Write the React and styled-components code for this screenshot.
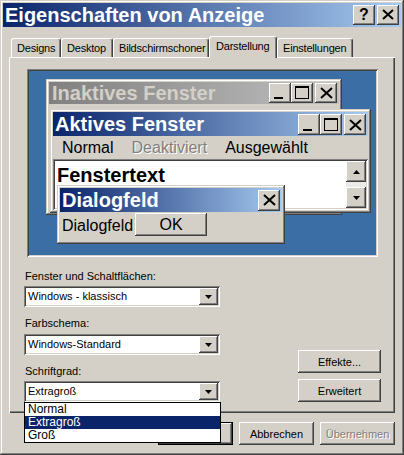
import React from 'react';
import styled, { createGlobalStyle } from 'styled-components';

const FACE = '#d4d0c8';

const GlobalStyle = createGlobalStyle`
  html, body {
    margin: 0;
    padding: 0;
    background: #d4d0c8;
  }
  body {
    font-family: "Liberation Sans", Arial, sans-serif;
    font-size: 11px;
    color: #000;
  }
  *, *::before, *::after {
    box-sizing: border-box;
  }
`;

const frameRaised = `box-shadow: inset -1px -1px #404040, inset 1px 1px #d4d0c8, inset -2px -2px #808080, inset 2px 2px #ffffff;`;
const buttonRaised = `box-shadow: inset -1px -1px #404040, inset 1px 1px #ffffff, inset -2px -2px #808080, inset 2px 2px #d4d0c8;`;
const fieldSunken = `box-shadow: inset 1px 1px #808080, inset -1px -1px #ffffff, inset 2px 2px #404040, inset -2px -2px #d4d0c8;`;

const Window = styled.div`
  width: 404px;
  height: 455px;
  padding: 3px;
  background: ${FACE};
  display: flex;
  flex-direction: column;
  ${frameRaised}
`;

const TitleBar = styled.div`
  height: 24px;
  flex: none;
  display: flex;
  align-items: center;
  padding: 0 2px;
  background: linear-gradient(to right, #0a246a, #a6caf0);
`;

const TitleText = styled.span`
  flex: 1;
  color: #fff;
  font-size: 20px;
  font-weight: bold;
  white-space: nowrap;
`;

const CaptionButton = styled.div`
  width: 22px;
  height: 20px;
  margin-left: 2px;
  display: flex;
  align-items: center;
  justify-content: center;
  background: ${FACE};
  ${buttonRaised}
  font-size: 16px;
  font-weight: bold;
  line-height: 1;
`;

const Body = styled.div`
  flex: 1;
  display: flex;
  flex-direction: column;
  padding: 9px 6px 0;
`;

const TabRow = styled.div`
  height: 21px;
  display: flex;
  align-items: flex-end;
  padding-left: 2px;
  position: relative;
  z-index: 1;
`;

const Tab = styled.div`
  width: ${p => p.$w}px;
  height: ${p => (p.$active ? 22 : 19)}px;
  margin-bottom: ${p => (p.$active ? -1 : 0)}px;
  padding: 0 0 ${p => (p.$active ? 3 : 0)}px ${p => (p.$active ? 6 : 5)}px;
  display: flex;
  align-items: center;
  background: ${FACE};
  border-top: 1px solid #fff;
  border-left: 1px solid #fff;
  border-right: 1px solid #404040;
  border-radius: 3px 3px 0 0;
  box-shadow: inset -1px 0 #808080;
  letter-spacing: -0.2px;
  white-space: nowrap;
`;

const Panel = styled.div`
  height: 356px;
  flex: none;
  padding: 12px 14px 0 15px;
  display: flex;
  flex-direction: column;
  box-shadow: inset 1px 1px #fff, inset -1px -1px #404040, inset -2px -2px #808080;
`;

const Preview = styled.div`
  position: relative;
  height: 188px;
  flex: none;
  margin: 0 3px;
  background: #3a6ea5;
  overflow: hidden;
  ${fieldSunken}
`;

const MiniWindow = styled.div`
  position: absolute;
  left: ${p => p.$x}px;
  top: ${p => p.$y}px;
  width: ${p => p.$w}px;
  height: ${p => p.$h}px;
  padding: 3px;
  background: ${FACE};
  display: flex;
  flex-direction: column;
  overflow: hidden;
  ${frameRaised}
`;

const MiniTitle = styled.div`
  height: ${p => p.$h}px;
  flex: none;
  display: flex;
  align-items: center;
  padding: 0 2px 0 ${p => p.$pad}px;
  background: ${p =>
    p.$inactive
      ? 'linear-gradient(to right, #808080, #c0c0c0)'
      : 'linear-gradient(to right, #0a246a, #a6caf0)'};
  color: ${p => (p.$inactive ? '#d4d0c8' : '#fff')};
  font-size: 20px;
  font-weight: bold;
  white-space: nowrap;
`;

const Grow = styled.span`
  flex: 1;
`;

const MiniButton = styled.div`
  width: 22px;
  height: ${p => p.$h}px;
  margin-left: ${p => p.$gap || 0}px;
  flex: none;
  display: flex;
  background: ${FACE};
  ${buttonRaised}
`;

const MenuBar = styled.div`
  height: 23px;
  flex: none;
  display: flex;
  align-items: center;
  gap: 18px;
  padding-left: 9px;
  font-size: 16px;
`;

const MenuItem = styled.span`
  color: ${p => (p.$disabled ? '#808080' : '#000')};
  text-shadow: ${p => (p.$disabled ? '1px 1px #fff' : 'none')};
`;

const TextArea = styled.div`
  flex: 1;
  display: flex;
  padding: 2px;
  background: #fff;
  ${fieldSunken}
`;

const WindowText = styled.div`
  flex: 1;
  padding: 2px 0 0 2px;
  font-size: 20px;
  font-weight: bold;
  line-height: 24px;
`;

const ScrollBar = styled.div`
  width: 20px;
  display: flex;
  flex-direction: column;
  justify-content: space-between;
  background: #eceae6;
`;

const ScrollButton = styled.div`
  height: 21px;
  display: flex;
  align-items: center;
  justify-content: center;
  background: ${FACE};
  ${buttonRaised}
`;

const DialogBody = styled.div`
  flex: 1;
  display: flex;
  align-items: flex-start;
  padding-left: 2px;
  font-size: 16px;
`;

const DialogLabel = styled.span`
  width: 73px;
  line-height: 28px;
  overflow: hidden;
  white-space: nowrap;
`;

const DialogButton = styled.div`
  width: 72px;
  height: 23px;
  margin-top: 1px;
  display: flex;
  align-items: center;
  justify-content: center;
  background: ${FACE};
  ${buttonRaised}
`;

const Lower = styled.div`
  display: flex;
  justify-content: space-between;
  align-items: flex-end;
`;

const Fields = styled.div`
  width: 197px;
  display: flex;
  flex-direction: column;
`;

const FieldLabel = styled.div`
  margin-top: ${p => p.$mt}px;
  padding-left: 1px;
  height: 13px;
  line-height: 13px;
  white-space: nowrap;
`;

const Combo = styled.div`
  position: relative;
  width: 196px;
  height: 21px;
  margin-top: ${p => p.$mt}px;
  padding: 2px;
  display: flex;
  background: #fff;
  ${fieldSunken}
`;

const ComboValue = styled.div`
  flex: 1;
  padding-left: 2px;
  line-height: 17px;
  white-space: nowrap;
`;

const ComboArrow = styled.div`
  width: 19px;
  height: 17px;
  display: flex;
  align-items: center;
  justify-content: center;
  background: ${FACE};
  ${buttonRaised}
`;

const DropList = styled.div`
  position: absolute;
  left: 0;
  top: 100%;
  width: 197px;
  z-index: 5;
  background: #fff;
  border: 1px solid #000;
`;

const DropItem = styled.div`
  height: 13px;
  line-height: 13px;
  padding-left: 3px;
  font-size: 12px;
  background: ${p => (p.$selected ? '#0a246a' : 'transparent')};
  color: ${p => (p.$selected ? '#fff' : '#000')};
`;

const Actions = styled.div`
  display: flex;
  flex-direction: column;
  gap: 6px;
`;

const PushButton = styled.div`
  width: ${p => p.$w || 75}px;
  height: 23px;
  display: flex;
  align-items: center;
  justify-content: center;
  background: ${FACE};
  color: ${p => (p.$disabled ? '#808080' : '#000')};
  text-shadow: ${p => (p.$disabled ? '1px 1px #fff' : 'none')};
  ${p =>
    p.$default
      ? 'box-shadow: inset 0 0 0 1px #000, inset -2px -2px #404040, inset 2px 2px #fff, inset -3px -3px #808080;'
      : buttonRaised}
`;

const ButtonRow = styled.div`
  display: flex;
  justify-content: flex-end;
  gap: 6px;
  margin-top: 9px;
`;

const CloseGlyph = ({ w = 22, h = 21, x0 = 6, y0 = 6, size = 11 }) => (
  <svg width={w} height={h} viewBox={`0 0 ${w} ${h}`}>
    <path
      d={`M${x0} ${y0} L${x0 + size} ${y0 + size - 1} M${x0 + size} ${y0} L${x0} ${y0 + size - 1}`}
      stroke="#000"
      strokeWidth="2"
      fill="none"
    />
  </svg>
);

const MinGlyph = ({ h = 21 }) => (
  <svg width="22" height={h} viewBox={`0 0 22 ${h}`}>
    <rect x="5" y={h - 6} width="9" height="2" fill="#000" />
  </svg>
);

const MaxGlyph = ({ h = 21 }) => (
  <svg width="22" height={h} viewBox={`0 0 22 ${h}`}>
    <rect x="4.5" y={h - 16.5} width="13" height="12" fill="none" stroke="#000" />
    <rect x="4" y={h - 17} width="14" height="2" fill="#000" />
  </svg>
);

const Arrow = ({ up }) => (
  <svg width="7" height="4" viewBox="0 0 7 4">
    <polygon points={up ? '3.5,0 7,4 0,4' : '0,0 7,0 3.5,4'} fill="#000" />
  </svg>
);

const TitleButtons = ({ h }) => (
  <>
    <MiniButton $h={h}>
      <MinGlyph h={h} />
    </MiniButton>
    <MiniButton $h={h}>
      <MaxGlyph h={h} />
    </MiniButton>
    <MiniButton $h={h} $gap={2}>
      <CloseGlyph h={h} y0={Math.round(h / 2) - 5} />
    </MiniButton>
  </>
);

const tabs = [
  { label: 'Designs', w: 50 },
  { label: 'Desktop', w: 52 },
  { label: 'Bildschirmschoner', w: 96 },
  { label: 'Darstellung', w: 68, active: true },
  { label: 'Einstellungen', w: 76 },
];

export default function App() {
  return (
    <>
      <GlobalStyle />
      <Window>
        <TitleBar>
          <TitleText>Eigenschaften von Anzeige</TitleText>
          <CaptionButton>?</CaptionButton>
          <CaptionButton>
            <CloseGlyph w={22} h={20} x0={6} y0={5} size={10} />
          </CaptionButton>
        </TitleBar>

        <Body>
          <TabRow>
            {tabs.map(t => (
              <Tab key={t.label} $w={t.w} $active={t.active}>
                {t.label}
              </Tab>
            ))}
          </TabRow>

          <Panel>
            <Preview>
              <MiniWindow $x={19} $y={10} $w={296} $h={136}>
                <MiniTitle $h={22} $pad={3} $inactive>
                  Inaktives Fenster
                  <Grow />
                  <TitleButtons h={20} />
                </MiniTitle>
              </MiniWindow>

              <MiniWindow $x={23} $y={40} $w={321} $h={104}>
                <MiniTitle $h={24} $pad={2}>
                  Aktives Fenster
                  <Grow />
                  <TitleButtons h={21} />
                </MiniTitle>
                <MenuBar>
                  <MenuItem>Normal</MenuItem>
                  <MenuItem $disabled>Deaktiviert</MenuItem>
                  <MenuItem>Ausgewählt</MenuItem>
                </MenuBar>
                <TextArea>
                  <WindowText>Fenstertext</WindowText>
                  <ScrollBar>
                    <ScrollButton>
                      <Arrow up />
                    </ScrollButton>
                    <ScrollButton>
                      <Arrow />
                    </ScrollButton>
                  </ScrollBar>
                </TextArea>
              </MiniWindow>

              <MiniWindow $x={30} $y={116} $w={228} $h={59}>
                <MiniTitle $h={24} $pad={2}>
                  Dialogfeld
                  <Grow />
                  <MiniButton $h={21}>
                    <CloseGlyph h={21} y0={5} />
                  </MiniButton>
                </MiniTitle>
                <DialogBody>
                  <DialogLabel>Dialogfeld</DialogLabel>
                  <DialogButton>OK</DialogButton>
                </DialogBody>
              </MiniWindow>
            </Preview>

            <Lower>
              <Fields>
                <FieldLabel $mt={13}>Fenster und Schaltflächen:</FieldLabel>
                <Combo $mt={3}>
                  <ComboValue>Windows - klassisch</ComboValue>
                  <ComboArrow>
                    <Arrow />
                  </ComboArrow>
                </Combo>
                <FieldLabel $mt={10}>Farbschema:</FieldLabel>
                <Combo $mt={4}>
                  <ComboValue>Windows-Standard</ComboValue>
                  <ComboArrow>
                    <Arrow />
                  </ComboArrow>
                </Combo>
                <FieldLabel $mt={10}>Schriftgrad:</FieldLabel>
                <Combo $mt={3}>
                  <ComboValue>Extragroß</ComboValue>
                  <ComboArrow>
                    <Arrow />
                  </ComboArrow>
                  <DropList>
                    <DropItem>Normal</DropItem>
                    <DropItem $selected>Extragroß</DropItem>
                    <DropItem>Groß</DropItem>
                  </DropList>
                </Combo>
              </Fields>
              <Actions>
                <PushButton $w={83}>Effekte...</PushButton>
                <PushButton $w={83}>Erweitert</PushButton>
              </Actions>
            </Lower>
          </Panel>

          <ButtonRow>
            <PushButton $default>OK</PushButton>
            <PushButton>Abbrechen</PushButton>
            <PushButton $disabled>Übernehmen</PushButton>
          </ButtonRow>
        </Body>
      </Window>
    </>
  );
}
